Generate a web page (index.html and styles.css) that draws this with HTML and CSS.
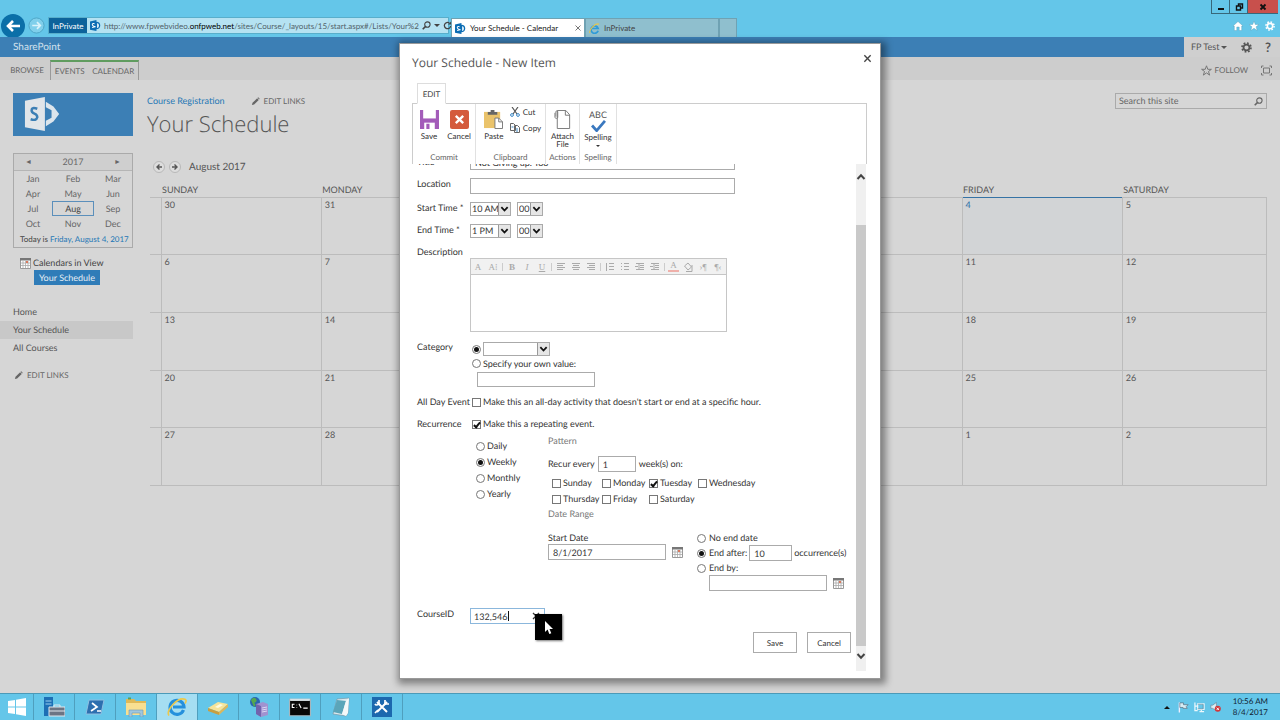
FILE: index.html
```html
<!DOCTYPE html>
<html lang="en">
<head>
<meta charset="utf-8">
<title>Your Schedule - Calendar</title>
<link rel="stylesheet" href="styles.css">
</head>
<body>
<svg class="defs" aria-hidden="true">
  <symbol id="sp" viewBox="0 0 12 12"><path d="M7 2.500a3.500 3.500 0 1 1 0 7z" fill="#dff1fb" stroke="#0c6db4" stroke-width="1.400"/><path d="M0 1.500 7 0v12L0 10.500z" fill="#0c6db4"/><path d="M5 4Q2.300 3.400 2.500 5T5 7 2.300 8.300" fill="none" stroke="#fff" stroke-width="1.100"/></symbol>
  <symbol id="pencil" viewBox="0 0 10 10"><path d="m1 9 .7-2.500L6.800 1.400l1.800 1.800-5.100 5.100zM7.300.9 8 .3l1.700 1.700-.7.700z" fill="#666"/></symbol>
  <symbol id="search" viewBox="0 0 10 10"><circle cx="6" cy="4" r="3" fill="none" stroke="currentColor" stroke-width="1.200"/><path d="M4 6 .8 9.200" stroke="currentColor" stroke-width="1.800"/></symbol>
  <symbol id="gear" viewBox="0 0 12 12"><circle cx="6" cy="6" r="3.200" fill="none" stroke="currentColor" stroke-width="1.900"/><circle cx="6" cy="6" r="4.900" fill="none" stroke="currentColor" stroke-width="1.800" stroke-dasharray="1.925 1.925"/></symbol>
  <symbol id="chev" viewBox="0 0 10 10"><path d="m1.500 3 3.500 3.700L8.500 3" fill="none" stroke="currentColor" stroke-width="2"/></symbol>
  <symbol id="cal" viewBox="0 0 11 11"><path d="M.5 1h10v9.500H.5z" fill="#fff" stroke="#999"/><path d="M0 0h11v2.500H0z" fill="#777"/><path d="M3 3v7M5.500 3v7M8 3v7M1 5h9M1 7.500h9" stroke="#aaa" stroke-width=".8"/><path d="M6 3h2v2H6z" fill="#d9795d"/></symbol>
  <symbol id="lines" viewBox="0 0 10 10"><path d="M1 1.500h8M1 3.500h6M1 5.500h8M1 7.500h6" stroke="currentColor"/></symbol>
  <symbol id="linesc" viewBox="0 0 10 10"><path d="M1 1.500h8M2 3.500h6M1 5.500h8M2 7.500h6" stroke="currentColor"/></symbol>
  <symbol id="linesr" viewBox="0 0 10 10"><path d="M1 1.500h8M3 3.500h6M1 5.500h8M3 7.500h6" stroke="currentColor"/></symbol>
  <symbol id="list" viewBox="0 0 10 10"><path d="M1.500 1v8M4 1.500h5M4 4.500h5M4 7.500h5" stroke="currentColor"/></symbol>
  <symbol id="bul" viewBox="0 0 10 10"><path d="M1 1.500h1M1 4.500h1M1 7.500h1M4 1.500h5M4 4.500h5M4 7.500h5" stroke="currentColor"/></symbol>
  <symbol id="ind" viewBox="0 0 10 10"><path d="M1 1.500h8M5 3.500h4M5 5.500h4M1 7.500h8M4 2v5M0 4.500h3" stroke="currentColor"/></symbol>
</svg>

<header class="chrome">
  <div class="window-buttons">
    <button aria-label="Minimize"><svg viewBox="0 0 10 10"><path d="M2 7h6" stroke="#111" stroke-width="2"/></svg></button>
    <button aria-label="Restore"><svg viewBox="0 0 10 10"><path d="M2.500 4h4v4h-4zM4.500 4V2h4v4h-2" fill="none" stroke="#111" stroke-width="1.400"/></svg></button>
    <button class="close" aria-label="Close window"><svg viewBox="0 0 10 10"><path d="m2.500 2.500 5 5m0-5-5 5" stroke="#111" stroke-width="1.800"/></svg></button>
  </div>
  <div class="browser-row">
    <button class="back" aria-label="Back"><svg viewBox="0 0 24 24"><circle cx="12" cy="12" r="12" fill="#0b6fa8"/><path d="M19 12H7m5-5-5 5 5 5" fill="none" stroke="#fff" stroke-width="2.600"/></svg></button>
    <button class="forward" aria-label="Forward"><svg viewBox="0 0 18 18"><circle cx="9" cy="9" r="8" fill="#7fcfeb" stroke="#4fa5c6"/><path d="M4.500 9h8M9.500 5.500 13 9l-3.500 3.500" fill="none" stroke="#d9f3fb" stroke-width="1.800"/></svg></button>
    <div class="address">
      <span class="private">InPrivate</span>
      <svg class="fav"><use href="#sp"/></svg>
      <span class="url">http://www.fpwebvideo.<b>onfpweb.net</b>/sites/Course/_layouts/15/start.aspx#/Lists/Your%2</span>
      <button aria-label="Search"><svg class="i9"><use href="#search"/></svg></button>
      <button aria-label="Show address list"><i class="tri"></i></button>
      <button aria-label="Refresh"><svg class="i9" viewBox="0 0 10 10"><path d="M8.500 5.500A3.500 3.500 0 1 1 7 2.200" fill="none" stroke="currentColor" stroke-width="1.400"/><path d="M5.500 4H9V.5z" fill="currentColor"/></svg></button>
    </div>
    <div class="tabs">
      <div class="tab active"><svg class="fav"><use href="#sp"/></svg><span>Your Schedule - Calendar</span><button aria-label="Close tab"><svg viewBox="0 0 6 6"><path d="m.5.500 5 5m0-5-5 5" stroke="#777"/></svg></button></div>
      <div class="tab"><svg class="fav" viewBox="0 0 12 12"><path d="M10 8.500A4 4 0 1 1 10 6H3" fill="none" stroke="#2f9bd8" stroke-width="1.900"/><path d="M1 11C-.5 8 7-.5 11 1.300" fill="none" stroke="#e8c64a" stroke-width="1.200"/></svg><span>InPrivate</span></div>
      <button class="newtab" aria-label="New tab"></button>
    </div>
    <div class="tools">
      <button aria-label="Home"><svg viewBox="0 0 10 10"><path d="M5 .5 0 5h1.300v4.500h2.500V6h2.400v3.500h2.500V5H10z" fill="#fff" stroke="#5599b5" stroke-width=".4"/></svg></button>
      <button aria-label="Favorites"><svg viewBox="0 0 10 10"><path d="m5 0 1.300 3.500H10L7.100 5.800 8.200 9.500 5 7.300 1.800 9.500l1.100-3.700L0 3.500h3.700z" fill="#fff" stroke="#5599b5" stroke-width=".4"/></svg></button>
      <button class="white" aria-label="Tools"><svg><use href="#gear"/></svg></button>
    </div>
  </div>
</header>

<div class="page">
  <div class="suite">
    <span class="brand">SharePoint</span>
    <div class="account">
      <button class="user">FP Test <i class="tri"></i></button>
      <button aria-label="Settings"><svg class="i11"><use href="#gear"/></svg></button>
      <button class="help" aria-label="Help">?</button>
    </div>
  </div>
  <nav class="ribbon-bar">
    <button class="browse">BROWSE</button>
    <div class="context"><button>EVENTS</button><button>CALENDAR</button></div>
    <div class="follow">
      <button><svg class="i11" viewBox="0 0 11 11"><path d="m5.500.8 1.300 3.500h3.600L7.500 6.500l1.100 3.600-3.100-2.200-3.100 2.200 1.100-3.600L.6 4.300h3.600z" fill="none" stroke="#777"/></svg>FOLLOW</button>
      <button aria-label="Focus on content"><svg class="i11" viewBox="0 0 11 11"><path d="M2.500 3h6v5h-6zM.5 3V1h2M8.500 1h2v2M10.500 8v2h-2M2.500 10h-2V8" fill="none" stroke="#777"/></svg></button>
    </div>
  </nav>
  <div class="site-head">
    <a class="logo" href="#" aria-label="Site logo"><svg viewBox="0 0 40 36"><path d="m23 5 8 5 6 8-6 8-8 5v-6l6-3v-8l-6-3z" fill="#dce5ec"/><circle cx="24" cy="18" r="4.500" fill="#3c7fb5"/><path d="M1 4 22 0v36L1 32z" fill="#e1e5e9"/><path d="M14 12.500q-6-2-6 1.500 0 2.500 3 3.700T14 21.500q-1 4-7 2" fill="none" stroke="#3c7fb5" stroke-width="2.600"/></svg></a>
    <div class="titles">
      <div class="crumbs"><a href="#">Course Registration</a><button class="edit"><svg class="i9"><use href="#pencil"/></svg>EDIT LINKS</button></div>
      <h1>Your Schedule</h1>
    </div>
    <label class="site-search"><input type="search" aria-label="Search this site" placeholder="Search this site"><svg class="i9"><use href="#search"/></svg></label>
  </div>
  <div class="workspace">
    <aside>
      <div class="picker">
        <div class="year"><button aria-label="Previous year">◄</button><span>2017</span><button aria-label="Next year">►</button></div>
        <div class="months">
          <button>Jan</button><button>Feb</button><button>Mar</button>
          <button>Apr</button><button>May</button><button>Jun</button>
          <button>Jul</button><button class="now">Aug</button><button>Sep</button>
          <button>Oct</button><button>Nov</button><button>Dec</button>
        </div>
        <p>Today is <a href="#">Friday, August 4, 2017</a></p>
      </div>
      <div class="views"><span><svg class="i11"><use href="#cal"/></svg>Calendars in View</span><button>Your Schedule</button></div>
      <nav class="quick"><a href="#">Home</a><a class="here" href="#">Your Schedule</a><a href="#">All Courses</a></nav>
      <button class="edit"><svg class="i9"><use href="#pencil"/></svg>EDIT LINKS</button>
    </aside>
    <main>
      <div class="month-nav">
        <button aria-label="Previous month"><svg viewBox="0 0 12 12"><circle cx="6" cy="6" r="5.500" fill="#ddd" stroke="#aaa" stroke-width=".7"/><path d="M9 6H4m2.500-2.500L4 6l2.500 2.500" fill="none" stroke="#555" stroke-width="1.400"/></svg></button>
        <button aria-label="Next month"><svg viewBox="0 0 12 12"><circle cx="6" cy="6" r="5.500" fill="#ddd" stroke="#aaa" stroke-width=".7"/><path d="M3 6h5M5.500 3.500 8 6 5.500 8.500" fill="none" stroke="#555" stroke-width="1.400"/></svg></button>
        <span>August 2017</span>
      </div>
      <table class="month">
        <colgroup><col class="wk"><col class="d"><col class="d"><col class="d"><col class="d"><col class="d"><col class="d"><col></colgroup>
        <thead><tr><td></td><th>SUNDAY</th><th>MONDAY</th><th>TUESDAY</th><th>WEDNESDAY</th><th>THURSDAY</th><th>FRIDAY</th><th>SATURDAY</th></tr></thead>
        <tbody>
          <tr><td></td><td>30</td><td>31</td><td>1</td><td>2</td><td>3</td><td class="today">4</td><td>5</td></tr>
          <tr><td></td><td>6</td><td>7</td><td>8</td><td>9</td><td>10</td><td>11</td><td>12</td></tr>
          <tr><td></td><td>13</td><td>14</td><td>15</td><td>16</td><td>17</td><td>18</td><td>19</td></tr>
          <tr><td></td><td>20</td><td>21</td><td>22</td><td>23</td><td>24</td><td>25</td><td>26</td></tr>
          <tr><td></td><td>27</td><td>28</td><td>29</td><td>30</td><td>31</td><td>1</td><td>2</td></tr>
        </tbody>
      </table>
    </main>
  </div>
</div>

<div class="overlay">
  <section class="dialog" role="dialog" aria-labelledby="dlg">
    <header class="dlg-head"><h2 id="dlg">Your Schedule - New Item</h2><button aria-label="Close dialog"><svg class="i9" viewBox="0 0 10 10"><path d="m1.500 1.500 7 7m0-7-7 7" stroke="#444" stroke-width="1.500"/></svg></button></header>
    <div class="edit-tab"><button>EDIT</button></div>
    <div class="ribbon">
      <div class="group">
        <div class="cmds">
          <button class="big"><svg viewBox="0 0 18 18"><path d="M0 0h18v18H0z" fill="#a35cb9"/><path d="M3 0h12v8H3z" fill="#fff"/><path d="M4 12h10v6H4z" fill="#fff"/><path d="M6 13h3v5H6z" fill="#a35cb9"/></svg>Save</button>
          <button class="big"><svg viewBox="0 0 18 18"><rect width="18" height="18" rx="2" fill="#d45a3c"/><path d="m5.500 5.500 7 7m0-7-7 7" stroke="#fff" stroke-width="2.200"/></svg>Cancel</button>
        </div><span>Commit</span>
      </div>
      <div class="group">
        <div class="cmds">
          <button class="big"><svg viewBox="0 0 20 20"><path d="M0 2h17v17H0z" fill="#eac36b"/><path d="M4 5V2h3V0h4v2h3v3z" fill="#666"/><path d="M11.500 8.500h4l4 4v7h-8z" fill="#fff" stroke="#777"/><path d="M15.500 8.500v4h4" fill="none" stroke="#777"/></svg>Paste</button>
          <div class="small">
            <button><svg viewBox="0 0 10 10"><path d="M2 0 7 7M8 0 3 7" stroke="#555" stroke-width="1.200"/><circle cx="2" cy="8" r="1.400" fill="none" stroke="#3c87c4"/><circle cx="8" cy="8" r="1.400" fill="none" stroke="#3c87c4"/></svg>Cut</button>
            <button><svg viewBox="0 0 10 10"><path d="M.5.500h3l2 2v5h-5zM4.500 2.500h3l2 2v5h-5z" fill="#fff" stroke="#666"/><path d="M6 6h2M6 8h2M1.500 4h2" stroke="#3c87c4"/></svg>Copy</button>
          </div>
        </div><span>Clipboard</span>
      </div>
      <div class="group">
        <div class="cmds"><button class="big attach"><svg viewBox="0 0 18 20"><path d="M3.500.500h9l4 4.500v14.500h-13z" fill="#fff" stroke="#777"/><path d="M12 .500v5h4.500" fill="none" stroke="#777"/><path d="M1 3v5q1.500 2 3 0V1.500q-1-1-2 0V7" fill="none" stroke="#777" stroke-width=".9"/></svg>Attach File</button></div><span>Actions</span>
      </div>
      <div class="group">
        <div class="cmds"><button class="big spell"><em>ABC</em><svg viewBox="0 0 16 13"><path d="m1 6 5 5.500L15 1" fill="none" stroke="#3a78bf" stroke-width="3"/></svg>Spelling<i class="tri"></i></button></div><span>Spelling</span>
      </div>
    </div>
    <div class="scroller">
      <form>
        <div class="row first"><label for="title">Title</label><input id="title" class="wide" type="text" value="Not Giving up. Too"></div>
        <div class="row"><label for="loc">Location</label><input id="loc" class="wide" type="text"></div>
        <div class="row"><label for="sh">Start Time *</label><div class="line">
          <span class="sel hour"><select id="sh"><option>10 AM</option></select><svg><use href="#chev"/></svg></span>
          <span class="sel min"><select aria-label="Start minutes"><option>00</option></select><svg><use href="#chev"/></svg></span></div></div>
        <div class="row"><label for="eh">End Time *</label><div class="line">
          <span class="sel hour"><select id="eh"><option>1 PM</option></select><svg><use href="#chev"/></svg></span>
          <span class="sel min"><select aria-label="End minutes"><option>00</option></select><svg><use href="#chev"/></svg></span></div></div>
        <div class="row"><label for="desc">Description</label><div class="rte">
          <div class="rte-bar">
            <button type="button" aria-label="Font">A</button><button type="button" aria-label="Size">A⁞</button><i></i><button type="button"><b>B</b></button><button type="button"><em>I</em></button><button type="button"><u>U</u></button><i></i>
            <button type="button" aria-label="Align left"><svg><use href="#lines"/></svg></button><button type="button" aria-label="Center"><svg><use href="#linesc"/></svg></button><button type="button" aria-label="Align right"><svg><use href="#linesr"/></svg></button><i></i>
            <button type="button" aria-label="Numbered list"><svg><use href="#list"/></svg></button><button type="button" aria-label="Bulleted list"><svg><use href="#bul"/></svg></button><button type="button" aria-label="Outdent"><svg><use href="#ind"/></svg></button><button type="button" aria-label="Indent"><svg><use href="#ind"/></svg></button><i></i>
            <button type="button" class="color" aria-label="Text color">A</button><button type="button" aria-label="Highlight"><svg viewBox="0 0 10 10"><path d="M1.500 4 5 1l3.500 4L5 8zM3 9.500h6V3" fill="none" stroke="currentColor"/></svg></button><button type="button" aria-label="Left to right">›¶</button><button type="button" aria-label="Right to left">¶‹</button>
          </div>
          <textarea id="desc"></textarea></div></div>
        <div class="row"><span class="lab">Category</span><div class="category">
          <div class="line tight"><input type="radio" name="cat" checked aria-label="Choose category"><span class="sel cat"><select aria-label="Category"><option></option></select><svg><use href="#chev"/></svg></span></div>
          <label class="opt"><input type="radio" name="cat">Specify your own value:</label>
          <input type="text" class="own" aria-label="Own value"></div></div>
        <div class="row"><span class="lab">All Day Event</span><label class="opt"><input type="checkbox">Make this an all-day activity that doesn't start or end at a specific hour.</label></div>
        <div class="row recur"><span class="lab">Recurrence</span><div>
          <label class="opt"><input type="checkbox" checked>Make this a repeating event.</label>
          <div class="pattern">
            <div class="freq">
              <label class="opt"><input type="radio" name="f">Daily</label>
              <label class="opt"><input type="radio" name="f" checked>Weekly</label>
              <label class="opt"><input type="radio" name="f">Monthly</label>
              <label class="opt"><input type="radio" name="f">Yearly</label>
            </div>
            <div class="detail">
              <h3>Pattern</h3>
              <div class="every"><label for="n">Recur every</label><input id="n" type="text" value="1"><span>week(s) on:</span></div>
              <div class="days">
                <label class="opt"><input type="checkbox">Sunday</label><label class="opt"><input type="checkbox">Monday</label><label class="opt"><input type="checkbox" checked>Tuesday</label><label class="opt"><input type="checkbox">Wednesday</label>
                <label class="opt"><input type="checkbox">Thursday</label><label class="opt"><input type="checkbox">Friday</label><label class="opt"><input type="checkbox">Saturday</label>
              </div>
              <h3>Date Range</h3>
              <div class="range">
                <div class="start"><label for="sd">Start Date</label><div class="line"><input id="sd" type="text" value="8/1/2017"><button type="button" aria-label="Pick start date"><svg class="i11"><use href="#cal"/></svg></button></div></div>
                <div class="end">
                  <label class="opt"><input type="radio" name="e">No end date</label>
                  <div class="after"><label class="opt"><input type="radio" name="e" checked>End after:</label><input type="text" value="10" aria-label="Occurrences"><span>occurrence(s)</span></div>
                  <label class="opt"><input type="radio" name="e">End by:</label>
                  <div class="line by"><input type="text" aria-label="End date"><button type="button" aria-label="Pick end date"><svg class="i11"><use href="#cal"/></svg></button></div>
                </div>
              </div>
            </div>
          </div></div></div>
        <div class="row"><label for="cid">CourseID</label><div class="course"><input id="cid" type="text" value="132,546"><i class="caret"></i><svg class="clear" viewBox="0 0 8 8"><path d="m1 1 6 6m0-6-6 6" stroke="#333" stroke-width="1.300"/></svg>
          <div class="pointer"><svg viewBox="0 0 8 13"><path d="M0 0v11l2.600-2.400L4.300 13l2-.8L4.500 8H8z" fill="#fff"/></svg></div></div></div>
        <div class="actions"><button type="button">Save</button><button type="button">Cancel</button></div>
      </form>
      <div class="scrollbar"><svg class="up"><use href="#chev"/></svg><div class="thumb"></div><svg><use href="#chev"/></svg></div>
    </div>
  </section>
</div>

<footer class="taskbar">
  <button aria-label="Start"><svg viewBox="0 0 20 20"><path d="m1 4 7-1v6.500H1zm8-1.200L19 1v8.500H9zM1 10.500h7V17l-7-1zm8 0h10V19L9 17.200z" fill="#fff"/></svg></button>
  <button aria-label="Server Manager"><svg viewBox="0 0 22 20"><path d="M1 0h9v19H1z" fill="#1d6fb5"/><path d="M2.500 4h6M2.500 7h6" stroke="#9cd0ef"/><path d="M6 10h16v9H6z" fill="#6c7584" stroke="#dfe8ee"/><path d="M11 10V8h6v2M6 14h16" fill="none" stroke="#dfe8ee"/></svg></button>
  <button aria-label="PowerShell"><svg viewBox="0 0 20 20"><path d="M4 3h15l-3 14H1z" fill="#2d6faf" stroke="#8fbfe2"/><path d="m7 6 5 4-6 4m6 0h4" fill="none" stroke="#fff" stroke-width="1.700"/></svg></button>
  <button aria-label="File Explorer"><svg viewBox="0 0 22 20"><path d="M1 2h8l2 2h10v14H1z" fill="#dfb957"/><path d="M1 6h20v12H1z" fill="#f8df91"/><path d="M4 20v-7h14v7h-3v-4H7v4z" fill="#9fc6de" stroke="#6b98b5" stroke-width=".6"/><path d="M3 1.500h3" stroke="#57a05b" stroke-width="2"/></svg></button>
  <button class="on" aria-label="Internet Explorer"><svg viewBox="0 0 20 20"><path d="M16.500 13A7 7 0 1 1 17 10H6" fill="none" stroke="#2590dc" stroke-width="3.200"/><path d="M2 18.500C-2 14 11-1 18.500 2.500c1 .8.500 2.500-.5 4" fill="none" stroke="#edc84b" stroke-width="1.600"/></svg></button>
  <button aria-label="Installer"><svg viewBox="0 0 22 20"><path d="m1 11 10-6 10 2-9 8z" fill="#f6e49a"/><path d="m1 11 11 4v3L1 14z" fill="#c99f3f"/><path d="m12 15 9-8v3l-9 8z" fill="#dcb75c"/><path d="m8 10 5-3 3 1-5 3z" fill="#fffbe0"/></svg></button>
  <button aria-label="IIS Manager"><svg viewBox="0 0 20 20"><circle cx="6" cy="5" r="5" fill="#2a64b0"/><path d="M2 3q3-4 5-1T5 6q3 1 0 4" fill="#55a84f"/><path d="m7 7 7-2 5 2v11l-7 2-5-3z" fill="#a093d0"/><path d="m7 7 5 2v11l-5-3z" fill="#7163ad"/><path d="m13 11 5-1m-5 3 5-1m-5 3 5-1" stroke="#dcd6f3"/></svg></button>
  <button aria-label="Command Prompt"><svg viewBox="0 0 20 18"><path d="M.5 2h19v15H.5z" fill="#080808" stroke="#a6b5bc"/><path d="M1 2.500h18" stroke="#d9e2e6" stroke-width="2"/><path d="M5 6.500H3v3h2M7 7v.5M7 9v.5M9 6l2 4M13 10h4" fill="none" stroke="#fff"/></svg></button>
  <button aria-label="Notepad"><svg viewBox="0 0 20 20"><path d="m6 2 12-1-1 15-2 3-13-2z" fill="#dce9ee" stroke="#7598a8" stroke-width=".7"/><path d="m6 3 9 1-4 13-9-2z" fill="#5ba5b9"/><path d="m15 4 3-3-1 15-2 3-4-2z" fill="#f4f8f9"/></svg></button>
  <button aria-label="Tools"><svg viewBox="0 0 20 20"><path d="M0 0h20v20H0z" fill="#1c68ae"/><path d="M5 5 15 15M15 5 5 15" stroke="#fff" stroke-width="2"/><path d="M3 7q1 2 4 0V3M13 3v4h4M3 16l3-3" fill="none" stroke="#fff" stroke-width="1.700"/></svg></button>
  <div class="tray">
    <i class="tri up"></i>
    <svg viewBox="0 0 12 12"><path d="M1.500 1v11" stroke="#eef" stroke-width="1.500"/><path d="M2 1.500h4v2h5l-2 2 1 2H5.500v-1H2z" fill="#d6edf5" stroke="#567" stroke-width=".7"/></svg>
    <svg viewBox="0 0 12 12"><path d="M4 2.500h7v6H4zM1 1v4h3M6 11h5M8 9v2M1 5v5h3" fill="none" stroke="#edf8fc" stroke-width="1.300"/><path d="M4 3h6v5H4" fill="none" stroke="#467" stroke-width=".5"/></svg>
    <svg viewBox="0 0 12 12"><path d="M1 4h2l4-3v9L3 7.500H1z" fill="#dbeef5" stroke="#678" stroke-width=".6"/><circle cx="8.500" cy="8" r="3.300" fill="#d2373b"/><path d="m7.200 6.700 2.600 2.600m0-2.600L7.200 9.300" stroke="#fff"/></svg>
    <div class="clock"><span>10:56 AM</span><span>8/4/2017</span></div>
  </div>
</footer>
</body>
</html>
```
FILE: styles.css
```css
* { box-sizing: border-box; }
body {
  margin: 0; min-height: 100vh; display: grid; grid-template-rows: auto 1fr auto;
  font: 9px/12px Lato, "Open Sans", sans-serif; color: #444; background: #d6d6d6; overflow: hidden;
  text-rendering: geometricPrecision;
}
button, input, select, textarea { font: inherit; color: inherit; margin: 0; padding: 0; border: 0; border-radius: 0; background: none; text-rendering: inherit; }
button { display: inline-flex; align-items: center; justify-content: center; white-space: nowrap; }
a { color: #2577b5; text-decoration: none; }
h1, h2, h3, p { margin: 0; font-weight: 400; }
.defs { position: absolute; width: 0; height: 0; }
svg { flex: none; }
.i9 { width: 9px; height: 9px; }
.i11 { width: 11px; height: 11px; }
.fav { width: 11px; height: 11px; }
.tri { border: 3px solid transparent; border-top-color: currentColor; border-bottom: 0; width: 0; height: 0; display: inline-block; }
.tri.up { border-top: 0; border-bottom: 3px solid #111; }

.chrome { background: #64c6e9; height: 37px; }
.window-buttons { display: flex; justify-content: flex-end; height: 14px; padding-right: 2px; }
.window-buttons button { width: 18px; border: 1px solid #37677a; border-top: 0; border-right: 0; }
.window-buttons .close { width: 31px; background: #c8504c; }
.window-buttons svg { width: 10px; height: 10px; }
.browser-row { display: flex; height: 23px; align-items: center; padding-left: 1px; color: #444; }
.back svg { width: 24px; height: 24px; }
.forward { margin: 0 3px; }
.forward svg { width: 17px; height: 17px; }
.address { display: flex; align-items: center; gap: 3px; width: 401px; height: 17px; background: #b5e2f2; border: 1px solid #58aecb; padding-right: 3px; }
.private { background: #0d639b; color: #fff; width: 38px; flex: none; font-size: 8px; height: 15px; display: flex; align-items: center; justify-content: center; }
.url { flex: 1; white-space: nowrap; font-size: 8px; color: #52636b; }
.url b { font-weight: 400; color: #000; }
.tabs { display: flex; align-self: flex-end; height: 19px; margin-left: 2px; flex: 1; }
.tab { display: flex; align-items: center; gap: 4px; width: 134px; padding: 0 3px; background: #8fbfce; border: 1px solid #6fa2b3; border-bottom: 0; font-size: 8px; }
.tab.active { background: #fff; color: #222; }
.tab span { flex: 1; white-space: nowrap; }
.tab button svg { width: 6px; height: 6px; }
.newtab { width: 18px; background: #8fbfce; border: 1px solid #6fa2b3; border-bottom: 0; }
.tools { display: flex; gap: 6px; padding-right: 5px; }
.tools svg { width: 10px; height: 10px; }
.white { color: #fff; }

.suite { display: flex; height: 20px; background: #3c7fb5; align-items: stretch; }
.brand { flex: 1; padding-left: 13px; font-size: 10px; line-height: 20px; color: #d5e3ee; }
.account { width: 96px; display: flex; align-items: center; justify-content: space-between; background: #cfcfcf; padding: 0 9px 0 7px; color: #555; }
.user { gap: 2px; }
.help { font-size: 13px; font-weight: 700; }
.ribbon-bar { display: flex; height: 23px; background: #cdcdcd; padding-top: 3px; color: #666; font-size: 8px; }
.browse { width: 50px; padding-left: 4px; }
.context { display: flex; border: 1px solid #999; border-top: 2px solid #5f9c5f; border-bottom: 0; width: 89px; justify-content: space-around; }
.follow { margin-left: auto; display: flex; gap: 13px; padding-right: 8px; }
.follow button { gap: 3px; }
.site-head { display: flex; padding: 13px 13px 0; height: 73px; gap: 14px; }
.logo { width: 120px; height: 43px; background: #3c7fb5; padding: 3px 11px; }
.logo svg { width: 38px; height: 36px; }
.titles { flex: 1; }
.crumbs { display: flex; gap: 26px; height: 16px; align-items: center; }
.edit { gap: 4px; color: #666; font-size: 8px; }
h1 { font-family: "Open Sans", sans-serif; font-weight: 300; font-size: 22px; line-height: 30px; color: #555; }
.site-search { display: flex; align-items: center; width: 152px; height: 16px; border: 1px solid #aaa; padding: 0 3px; color: #666; }
.site-search input { flex: 1; min-width: 0; outline: 0; }
.site-search input::placeholder { color: #666; opacity: 1; }
.workspace { display: flex; gap: 17px; padding-right: 13px; }
aside { width: 133px; flex: none; }
.picker { margin-left: 13px; border: 1px solid #aaa; height: 95px; color: #666; }
.year { display: flex; justify-content: space-between; align-items: center; padding: 0 11px; height: 17px; border-bottom: 1px solid #b5b5b5; background: #cfcfcf; }
.year button { font-size: 7px; }
.months { display: grid; grid-template-columns: 1fr 42px 1fr; grid-auto-rows: 15px; }
.months .now { border: 1px solid #5b8fbb; color: #444; }
.picker p { padding: 1px 0 0 6px; white-space: nowrap; color: #444; font-size: 8px; line-height: 14px; }
.views { display: flex; flex-direction: column; align-items: flex-start; padding: 8px 0 0 20px; }
.views span { display: flex; gap: 2px; align-items: center; height: 14px; }
.views button { height: 15px; width: 66px; margin-left: 14px; background: #2f7cb8; color: #e6eef4; }
.quick { display: flex; flex-direction: column; padding: 18px 0 12px; }
.quick a { height: 18px; padding-left: 13px; line-height: 18px; color: #555; }
.quick .here { background: #c8c8c8; }
aside .edit { margin-left: 14px; }
main { flex: 1; min-width: 0; }
.month-nav { display: flex; align-items: center; gap: 4px; padding: 8px 0 8px 3px; }
.month-nav svg { width: 12px; height: 12px; }
.month-nav span { margin-left: 4px; font-size: 10px; color: #555; }
.month { width: 100%; height: 305px; table-layout: fixed; border-collapse: collapse; color: #555; }
.wk { width: 11px; }
.d { width: 14.35%; }
.month th { text-align: left; font-weight: 400; height: 16px; padding: 2px 0 0 1px; }
.month thead td { height: 16px; padding: 0; }
.month td { vertical-align: top; padding: 1px 3px; }
.month tbody td { border: 1px solid #bcbcbc; height: 20%; }
.month tbody td:first-child { border-left: 0; }
.month tbody .today { border-top-color: #3673a5; color: #2a6da5; background: #d2d4d6; }

.overlay { position: absolute; inset: 0; display: flex; justify-content: center; align-items: flex-start; padding-top: 43px; }
.dialog { width: 482px; background: #fff; border: 1px solid #999; box-shadow: 2px 2px 7px 3px rgba(0,0,0,.4); padding: 0 13px 7px 12px; }
.dlg-head { display: flex; justify-content: space-between; height: 39px; }
.dlg-head h2 { font-family: "Open Sans", sans-serif; font-size: 12px; line-height: 38px; color: #555; }
.dlg-head button { height: 28px; width: 13px; margin-right: -7px; }
.edit-tab { height: 20px; padding-left: 5px; font-size: 8px; }
.edit-tab button { width: 29px; height: 21px; border: 1px solid #ddd; border-bottom-color: #fff; position: relative; }
.ribbon { display: flex; height: 61px; border: 1px solid #ccc; border-bottom: 0; font-size: 8px; line-height: 9px; }
.group { display: flex; flex-direction: column; justify-content: space-between; align-items: center; border-right: 1px solid #e1e1e1; color: #666; }
.group:nth-child(1) { width: 63px; }
.group:nth-child(2) { width: 70px; }
.group:nth-child(3) { width: 34px; }
.group:nth-child(4) { width: 37px; }
.group > span { padding-bottom: 2px; }
.cmds { display: flex; gap: 2px; padding-top: 6px; color: #333; }
.big { flex-direction: column; justify-content: flex-start; gap: 3px; min-width: 28px; }
.big svg { width: 19px; height: 19px; }
.big.attach { white-space: normal; width: 30px; line-height: 8px; }
.big.spell { gap: 1px; }
.spell em { font-style: normal; font-size: 9px; color: #555; }
.spell svg { width: 15px; height: 12px; }
.spell .tri { border-width: 2px 2px 0; margin-top: 2px; }
.small { display: flex; flex-direction: column; gap: 6px; align-items: flex-start; margin-top: -3px; }
.small button { gap: 3px; height: 10px; }
.small svg { width: 10px; height: 10px; }

.scroller { display: flex; height: 507px; overflow: hidden; padding-right: 1px; }
form { flex: 1; min-width: 0; margin-top: -10px; padding-left: 5px; display: flex; flex-direction: column; gap: 8px; color: #333; }
.row { display: grid; grid-template-columns: 53px 1fr; align-items: start; white-space: nowrap; }
.row.first { align-items: center; }
input[type=text] { border: 1px solid #ababab; height: 16px; padding: 0 4px; min-width: 0; outline: 0; background: #fff; }
.wide { width: 265px; }
.line { display: flex; gap: 6px; align-items: center; }
.tight { gap: 2px; }
.sel { position: relative; display: flex; height: 14px; border: 1px solid #aaa; }
.sel select { appearance: none; width: 100%; padding-left: 1px; outline: 0; }
.sel svg { position: absolute; right: 0; top: 0; width: 12px; height: 12px; padding: 1px; background: #e6e6e6; border-left: 1px solid #999; color: #111; pointer-events: none; }
.hour { width: 41px; }
.min { width: 26px; }
.cat { width: 67px; }
.rte { margin-top: 12px; width: 257px; height: 74px; border: 1px solid #c6c6c6; display: flex; flex-direction: column; }
.rte-bar { height: 16px; display: flex; align-items: center; gap: 3px; padding: 0 1px; background: #f1f1f1; border-bottom: 1px solid #c6c6c6; color: #aaa; font-family: "Liberation Serif", serif; }
.rte-bar button { width: 12px; }
.rte-bar svg { width: 10px; height: 10px; }
.rte-bar i { width: 1px; height: 8px; background: #ccc; }
.rte-bar .color { border-bottom: 2px solid #efb0aa; line-height: 9px; width: 11px; }
textarea { flex: 1; resize: none; outline: 0; }
.category { height: 47px; display: flex; flex-direction: column; align-items: flex-start; gap: 1px; padding: 2px 0 0 2px; }
.own { width: 118px; margin-left: 5px; }
.opt { display: inline-flex; align-items: center; gap: 2px; height: 14px; }
input[type=radio], input[type=checkbox] { appearance: none; width: 9px; height: 9px; border: 1px solid #777; background: #fff; flex: none; display: grid; place-items: center; }
input[type=radio] { border-radius: 50%; }
input[type=radio]:checked::before { content: ""; width: 5px; height: 5px; border-radius: 50%; background: #111; }
input[type=checkbox]:checked::before { content: ""; width: 2px; height: 5px; margin-bottom: 2px; border: solid #111; border-width: 0 2px 2px 0; transform: rotate(40deg); }
.lab { padding-top: 1px; }
.row > .opt, .recur > div > .opt { padding-left: 2px; }
.recur { min-height: 183px; }
.pattern { display: flex; padding-left: 6px; }
.freq { width: 72px; display: flex; flex-direction: column; gap: 2px; padding-top: 8px; }
.detail { flex: 1; padding-top: 4px; }
h3 { font-size: 9px; line-height: 12px; color: #777; }
.every { display: flex; align-items: center; gap: 3px; padding: 9px 0 4px; }
.every input { width: 38px; }
.days { display: grid; grid-template-columns: 50px 47px 49px auto; row-gap: 2px; padding: 0 0 2px 4px; justify-content: start; }
.range { display: flex; gap: 14px; padding-top: 11px; }
.start label { display: block; line-height: 13px; }
.start input, .by input { width: 118px; }
.end { display: flex; flex-direction: column; align-items: flex-start; }
.end .opt { gap: 3px; }
.after { display: flex; align-items: center; gap: 2px; height: 16px; }
.after input[type=text] { width: 43px; }
.by { padding-left: 12px; }
.course { position: relative; }
.course input { width: 75px; border-color: #8bb7dc; display: block; padding-left: 3px; }
.caret { position: absolute; left: 38px; top: 3px; width: 1px; height: 10px; background: #111; }
.clear { position: absolute; left: 62px; top: 4px; width: 8px; height: 8px; }
.pointer { position: absolute; left: 65px; top: 6px; width: 27px; height: 26px; background: #000; box-shadow: 1px 1px 2px #777; display: grid; place-items: center; }
.pointer svg { width: 8px; height: 13px; }
.actions { display: flex; justify-content: flex-end; gap: 10px; padding-right: 5px; }
.actions button { width: 44px; height: 21px; border: 1px solid #ababab; font-size: 8px; }
.scrollbar { width: 10px; background: #f0f0f0; display: flex; flex-direction: column; align-items: center; padding: 8px 0 10px; gap: 1px; color: #444; }
.scrollbar svg { width: 10px; height: 10px; }
.scrollbar .up { transform: rotate(180deg); margin-bottom: 42px; }
.thumb { flex: 1; width: 100%; background: #c9c9c9; margin-bottom: 4px; }

.taskbar { position: relative; height: 27px; display: flex; background: #64c6e9; border-top: 1px solid #4b9ab8; color: #123; }
.taskbar > button { width: 41px; border-right: 1px solid #4f9fbe; }
.taskbar > button:first-child { width: 34px; }
.taskbar .on { background: #a5def2; }
.taskbar > button svg { width: 22px; height: 20px; }
.tray { margin-left: auto; display: flex; align-items: center; gap: 5px; padding-right: 12px; }
.tray > svg { width: 11px; height: 12px; }
.tray > .tri { margin-right: 3px; }
.clock { display: flex; flex-direction: column; align-items: center; font-size: 8px; line-height: 11px; margin-left: 7px; }
```
